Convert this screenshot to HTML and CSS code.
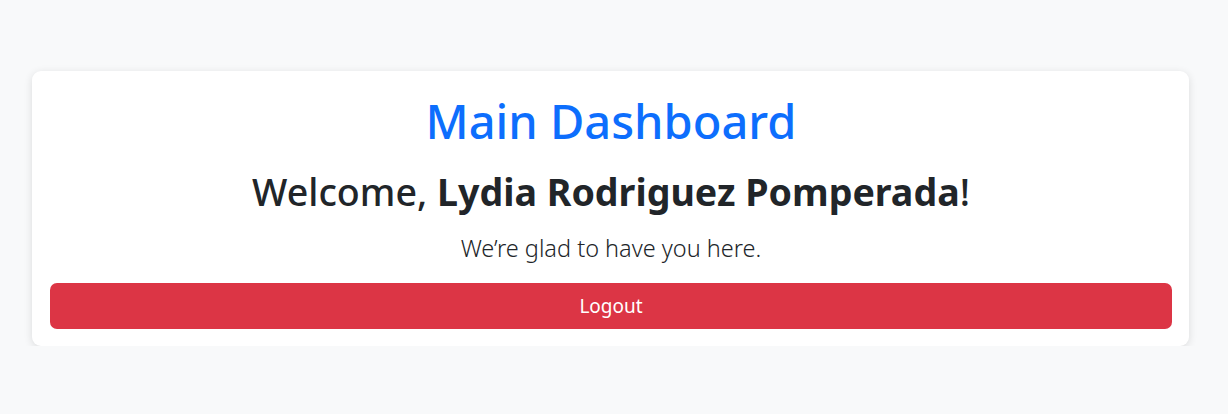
FILE: index.html
```html
<!DOCTYPE html>
<html lang="en">
<head>
<meta charset="utf-8">
<title>Main Dashboard</title>
<link rel="stylesheet" href="styles.css">
</head>
<body>
<main class="page">
  <section class="card">
    <h1 class="title">Main Dashboard</h1>
    <h2 class="welcome">Welcome, <strong>Lydia Rodriguez Pomperada</strong>!</h2>
    <p class="lead">We’re glad to have you here.</p>
    <button class="logout" type="button">Logout</button>
  </section>
</main>
</body>
</html>
```

FILE: styles.css
```css
* { box-sizing: border-box; }
html, body { margin: 0; padding: 0; }
body {
  background: #f8f9fa;
  font-family: "Noto Sans", "Open Sans", sans-serif;
  color: #212529;
}
.page {
  padding: 71px 39px 0 32px;
}
.card {
  background: #fff;
  border-radius: 9px;
  box-shadow: 0 2px 8px rgba(0,0,0,0.12);
  padding: 22px 17px 17px 18px;
  display: flex;
  flex-direction: column;
  align-items: stretch;
  text-align: center;
}
.title {
  margin: 0;
  color: #0d6efd;
  font-size: 47px;
  font-weight: 500;
  line-height: 1.2;
}
.welcome {
  margin: 20px 0 0;
  font-size: 37.6px;
  font-weight: 500;
  line-height: 1.2;
}
.welcome strong { font-weight: 700; }
.lead {
  margin: 16px 0 0;
  font-size: 23.5px;
  font-weight: 300;
  line-height: 1.5;
}
.logout {
  margin-top: 17px;
  height: 46px;
  border: 0;
  border-radius: 7px;
  background: #dc3545;
  color: #fff;
  font-family: inherit;
  font-size: 19px;
  font-weight: 400;
}
```
